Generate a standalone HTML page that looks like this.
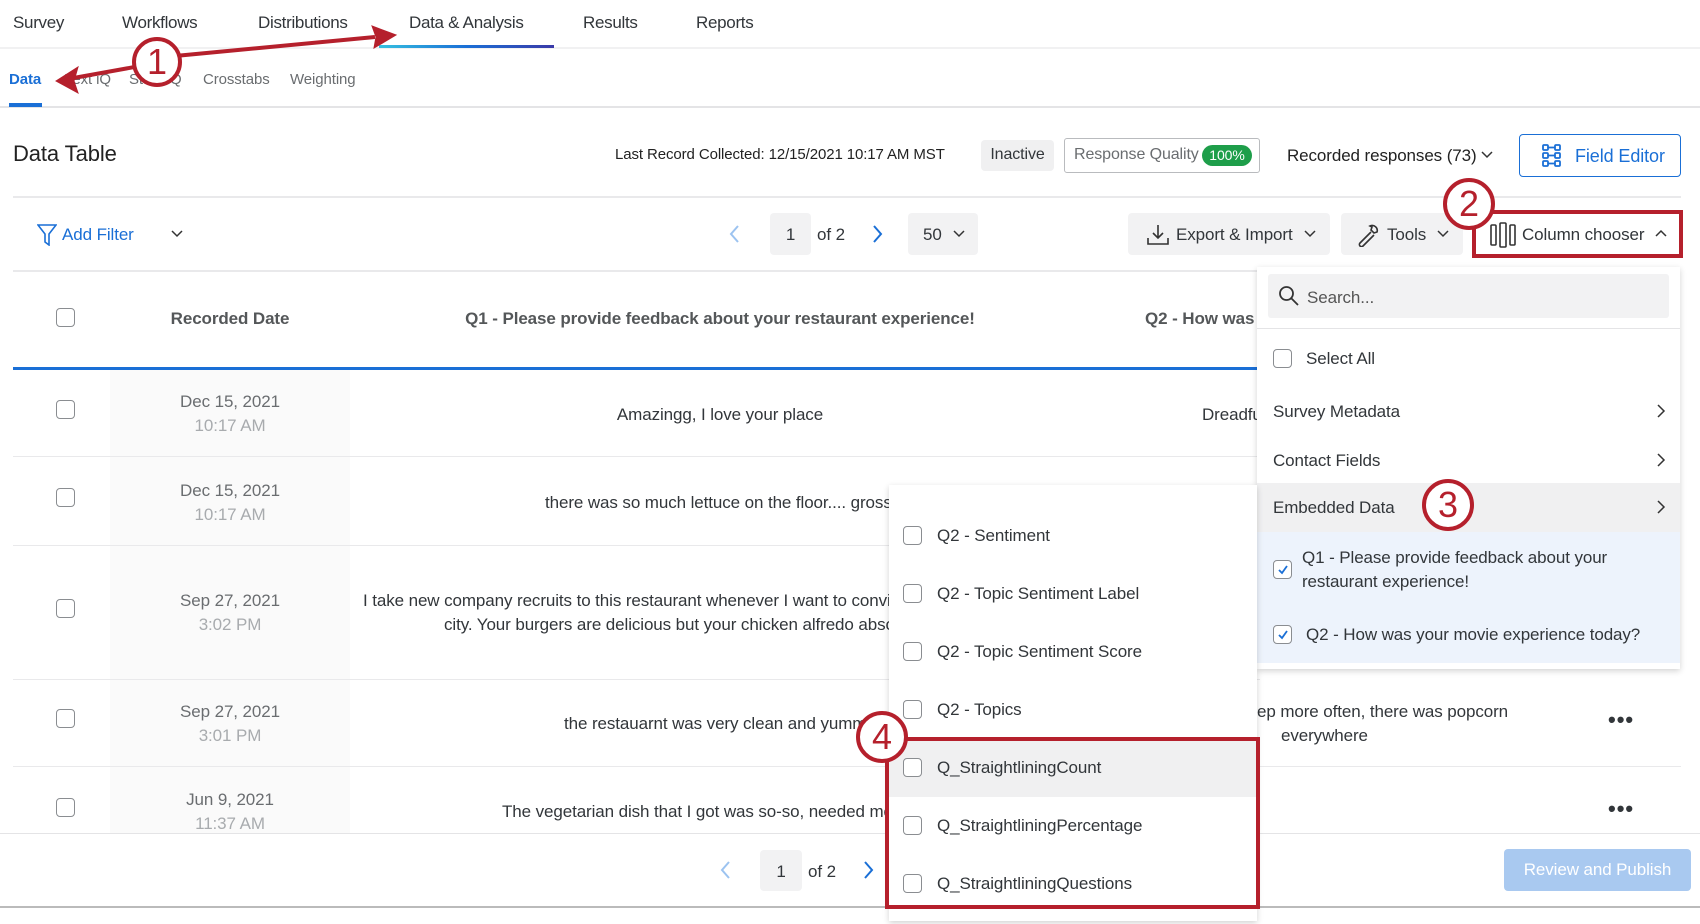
<!DOCTYPE html>
<html><head><meta charset="utf-8">
<style>
*{box-sizing:border-box;margin:0;padding:0}
body{width:1700px;height:924px;position:relative;overflow:hidden;background:#fff;font-family:"Liberation Sans",sans-serif;color:#32363a;font-size:17px;letter-spacing:-0.1px}
.a{position:absolute;white-space:nowrap}
.cb{position:absolute;width:19px;height:19px;border:1.5px solid #8a8d91;border-radius:4px;background:#fff}
.c{position:absolute;text-align:center;white-space:nowrap}
.btn{position:absolute;background:#f2f2f3;border-radius:4px}
.circ{position:absolute;border:4px solid #b5202c;border-radius:50%;background:#fff;color:#b5202c;font-size:36px;text-align:center;font-family:"Liberation Sans",sans-serif;letter-spacing:0}
.row{position:absolute;left:13px;width:1247px;height:1px;background:#e9e9eb}
.gray{color:#a8abae}
.nav{letter-spacing:-0.3px}
</style></head><body>
<div class="a nav" style="left:13px;top:13px;font-size:17px">Survey</div>
<div class="a nav" style="left:122px;top:13px;font-size:17px">Workflows</div>
<div class="a nav" style="left:258px;top:13px;font-size:17px">Distributions</div>
<div class="a nav" style="left:409px;top:13px;font-size:17px">Data &amp; Analysis</div>
<div class="a nav" style="left:583px;top:13px;font-size:17px">Results</div>
<div class="a nav" style="left:696px;top:13px;font-size:17px">Reports</div>
<div class="a" style="left:0;top:47px;width:1700px;height:2px;background:#f1f1f2"></div>
<div class="a" style="left:379px;top:45px;width:175px;height:3px;background:linear-gradient(90deg,#36c0e0,#1a6fd6,#3a3aa8)"></div>
<div class="a" style="left:9px;top:71px;font-size:15px;color:#1a6fd6;font-weight:bold">Data</div>
<div class="a" style="left:65px;top:71px;font-size:15px;color:#6a6d70">Text iQ</div>
<div class="a" style="left:129px;top:71px;font-size:15px;color:#6a6d70">Stats iQ</div>
<div class="a" style="left:203px;top:71px;font-size:15px;color:#6a6d70">Crosstabs</div>
<div class="a" style="left:290px;top:71px;font-size:15px;color:#6a6d70">Weighting</div>
<div class="a" style="left:0;top:106px;width:1700px;height:2px;background:#e4e4e6"></div>
<div class="a" style="left:9px;top:103px;width:33px;height:4px;background:#1a6fd6"></div>
<div class="a" style="left:13px;top:141px;font-size:22px;color:#222">Data Table</div>
<div class="a" style="left:615px;top:146px;font-size:15px;color:#222">Last Record Collected: 12/15/2021 10:17 AM MST</div>
<div class="btn" style="left:981px;top:140px;width:73px;height:31px;background:#f0f0f1"><div class="c" style="width:100%;top:6px;font-size:16px">Inactive</div></div>
<div class="a" style="left:1064px;top:138px;width:196px;height:35px;border:1.5px solid #b9bbbe;border-radius:3px"></div>
<div class="a" style="left:1074px;top:146px;font-size:16px;color:#6a6d70">Response Quality</div>
<div class="a" style="left:1202px;top:145px;width:50px;height:21px;background:#1e9e4a;border-radius:11px;color:#fff;font-size:14px;text-align:center;line-height:21px">100%</div>
<div class="a" style="left:1287px;top:146px;font-size:17px;color:#222">Recorded responses (73)</div>
<svg class="a" style="left:1480px;top:150px" width="14" height="10"><path d="M2 2l5 5 5-5" stroke="#333" fill="none" stroke-width="1.5"/></svg>
<div class="a" style="left:1519px;top:134px;width:162px;height:43px;border:1.5px solid #1a6fd6;border-radius:4px"></div>
<svg class="a" style="left:1542px;top:144px" width="24" height="24" fill="none" stroke="#1a6fd6" stroke-width="1.8"><rect x="1" y="1" width="5" height="5" rx="1"/><rect x="13" y="1" width="5" height="5" rx="1"/><rect x="1" y="9" width="5" height="5" rx="1"/><rect x="13" y="9" width="5" height="5" rx="1"/><rect x="1" y="17" width="5" height="5" rx="1"/><rect x="13" y="17" width="5" height="5" rx="1"/><path d="M6 3.5h7M6 11.5h7M6 19.5h7"/></svg>
<div class="a" style="left:1575px;top:146px;font-size:18px;color:#1a6fd6">Field Editor</div>
<div class="a" style="left:13px;top:196px;width:1668px;height:2px;background:#e9e9eb"></div>
<svg class="a" style="left:37px;top:224px" width="20" height="22" fill="none" stroke="#1a6fd6" stroke-width="1.6"><path d="M1 1h18l-7 9v11l-4-3v-8z"/></svg>
<div class="a" style="left:62px;top:225px;font-size:17px;color:#1a6fd6">Add Filter</div>
<svg class="a" style="left:170px;top:229px" width="14" height="10"><path d="M2 2l5 5 5-5" stroke="#333" fill="none" stroke-width="1.5"/></svg>
<svg class="a" style="left:729px;top:224px" width="12" height="20"><path d="M9 2L2 10l7 8" stroke="#9cc3f0" fill="none" stroke-width="2"/></svg>
<div class="btn" style="left:770px;top:213px;width:41px;height:42px"><div class="c" style="width:100%;top:12px;font-size:17px">1</div></div>
<div class="a" style="left:817px;top:225px;font-size:17px">of 2</div>
<svg class="a" style="left:871px;top:224px" width="12" height="20"><path d="M3 2l7 8-7 8" stroke="#1a6fd6" fill="none" stroke-width="2"/></svg>
<div class="btn" style="left:908px;top:213px;width:70px;height:42px"><div class="a" style="left:15px;top:12px;font-size:17px">50</div><svg class="a" style="left:44px;top:16px" width="14" height="10"><path d="M2 2l5 5 5-5" stroke="#333" fill="none" stroke-width="1.5"/></svg></div>
<div class="btn" style="left:1128px;top:213px;width:202px;height:42px">
<svg class="a" style="left:19px;top:11px" width="22" height="22" fill="none" stroke="#333" stroke-width="1.6"><path d="M11 1v13M6 9l5 5 5-5M1 14v6h20v-6"/></svg>
<div class="a" style="left:48px;top:12px;font-size:17px">Export &amp; Import</div>
<svg class="a" style="left:175px;top:16px" width="14" height="10"><path d="M2 2l5 5 5-5" stroke="#333" fill="none" stroke-width="1.5"/></svg></div>
<div class="btn" style="left:1341px;top:213px;width:122px;height:42px">
<svg class="a" style="left:15px;top:10px" width="24" height="24" fill="none" stroke="#333" stroke-width="1.6"><path d="M14 3a5 5 0 0 1 7 6l-3 1-3-3 1-3zM15 9L4 20a2 2 0 0 0 3 3l11-11"/></svg>
<div class="a" style="left:46px;top:12px;font-size:17px">Tools</div>
<svg class="a" style="left:95px;top:16px" width="14" height="10"><path d="M2 2l5 5 5-5" stroke="#333" fill="none" stroke-width="1.5"/></svg></div>
<div class="a" style="left:1472px;top:210px;width:211px;height:48px;border:4px solid #b5202c"></div>
<svg class="a" style="left:1490px;top:222px" width="26" height="26" fill="none" stroke="#333" stroke-width="1.6"><rect x="1" y="3" width="5" height="20" rx="1"/><rect x="10" y="1" width="6" height="24" rx="1"/><rect x="20" y="3" width="5" height="20" rx="1"/></svg>
<div class="a" style="left:1522px;top:225px;font-size:17px">Column chooser</div>
<svg class="a" style="left:1654px;top:228px" width="14" height="10"><path d="M2 8l5-5 5 5" stroke="#333" fill="none" stroke-width="1.5"/></svg>
<div class="a" style="left:13px;top:270px;width:1247px;height:2px;background:#e9e9eb"></div>
<div class="cb" style="left:56px;top:308px"></div>
<div class="c" style="left:110px;width:240px;top:309px;font-weight:bold;color:#545759">Recorded Date</div>
<div class="c" style="left:350px;width:740px;top:309px;font-weight:bold;color:#545759">Q1 - Please provide feedback about your restaurant experience!</div>
<div class="a" style="left:1145px;top:309px;font-weight:bold;color:#545759">Q2 - How was</div>
<div class="a" style="left:13px;top:367px;width:1247px;height:3px;background:#1a6fd6"></div>
<div class="a" style="left:110px;top:370px;width:240px;height:464px;background:#fafafa"></div>
<div class="cb" style="left:56px;top:400px"></div>
<div class="c" style="left:110px;width:240px;top:392px;color:#6a6d70">Dec 15, 2021</div>
<div class="c gray" style="left:110px;width:240px;top:416px">10:17 AM</div>
<div class="c" style="left:350px;width:740px;top:405px">Amazingg, I love your place</div>
<div class="a" style="left:1202px;top:405px">Dreadfu</div>
<div class="row" style="top:456px"></div>
<div class="cb" style="left:56px;top:488px"></div>
<div class="c" style="left:110px;width:240px;top:481px;color:#6a6d70">Dec 15, 2021</div>
<div class="c gray" style="left:110px;width:240px;top:505px">10:17 AM</div>
<div class="a" style="left:545px;top:493px">there was so much lettuce on the floor.... gross floor</div>
<div class="row" style="top:545px"></div>
<div class="cb" style="left:56px;top:599px"></div>
<div class="c" style="left:110px;width:240px;top:591px;color:#6a6d70">Sep 27, 2021</div>
<div class="c gray" style="left:110px;width:240px;top:615px">3:02 PM</div>
<div class="a" style="left:363px;top:591px">I take new company recruits to this restaurant whenever I want to convince them</div>
<div class="a" style="left:444px;top:615px">city. Your burgers are delicious but your chicken alfredo absolutely</div>
<div class="row" style="top:679px"></div>
<div class="cb" style="left:56px;top:709px"></div>
<div class="c" style="left:110px;width:240px;top:702px;color:#6a6d70">Sep 27, 2021</div>
<div class="c gray" style="left:110px;width:240px;top:726px">3:01 PM</div>
<div class="a" style="left:564px;top:714px">the restauarnt was very clean and yummy. I will</div>
<div class="a" style="left:1257px;top:702px">ep more often, there was popcorn</div>
<div class="a" style="left:1281px;top:726px">everywhere</div>
<div class="a" style="left:1608px;top:707px;font-size:22px;font-weight:bold;letter-spacing:1px">•••</div>
<div class="row" style="top:766px;width:1668px"></div>
<div class="cb" style="left:56px;top:798px"></div>
<div class="c" style="left:110px;width:240px;top:790px;color:#6a6d70">Jun 9, 2021</div>
<div class="c gray" style="left:110px;width:240px;top:814px">11:37 AM</div>
<div class="a" style="left:502px;top:802px">The vegetarian dish that I got was so-so, needed more</div>
<div class="a" style="left:1608px;top:796px;font-size:22px;font-weight:bold;letter-spacing:1px">•••</div>
<div class="a" style="left:0;top:833px;width:1700px;height:91px;background:#fff"></div>
<div class="a" style="left:0;top:833px;width:1700px;height:1px;background:#e4e4e6"></div>
<svg class="a" style="left:720px;top:860px" width="12" height="20"><path d="M9 2L2 10l7 8" stroke="#9cc3f0" fill="none" stroke-width="2"/></svg>
<div class="btn" style="left:760px;top:850px;width:42px;height:41px"><div class="c" style="width:100%;top:12px;font-size:17px">1</div></div>
<div class="a" style="left:808px;top:862px;font-size:17px">of 2</div>
<svg class="a" style="left:862px;top:860px" width="12" height="20"><path d="M3 2l7 8-7 8" stroke="#1a6fd6" fill="none" stroke-width="2"/></svg>
<div class="a" style="left:1504px;top:849px;width:187px;height:42px;background:#a9c9f0;border-radius:4px;color:#fff;font-size:17px;text-align:center;line-height:42px">Review and Publish</div>
<div class="a" style="left:0;top:906px;width:1700px;height:2px;background:#bbb"></div>
<div class="a" style="left:1257px;top:267px;width:423px;height:402px;background:#fff;box-shadow:0 2px 6px rgba(0,0,0,.18)"></div>
<div class="a" style="left:1268px;top:274px;width:401px;height:44px;background:#f2f2f3;border-radius:3px"></div>
<svg class="a" style="left:1278px;top:285px" width="22" height="22" fill="none" stroke="#333" stroke-width="1.8"><circle cx="8.5" cy="8.5" r="6.5"/><path d="M13 13l7 7"/></svg>
<div class="a" style="left:1307px;top:288px;font-size:17px;color:#555">Search...</div>
<div class="a" style="left:1257px;top:328px;width:423px;height:1px;background:#e4e4e6"></div>
<div class="cb" style="left:1273px;top:349px"></div>
<div class="a" style="left:1306px;top:349px;font-size:17px">Select All</div>
<div class="a" style="left:1273px;top:402px">Survey Metadata</div>
<svg class="a" style="left:1656px;top:403px" width="10" height="16"><path d="M2 2l6 6-6 6" stroke="#333" fill="none" stroke-width="1.5"/></svg>
<div class="a" style="left:1273px;top:451px">Contact Fields</div>
<svg class="a" style="left:1656px;top:452px" width="10" height="16"><path d="M2 2l6 6-6 6" stroke="#333" fill="none" stroke-width="1.5"/></svg>
<div class="a" style="left:1257px;top:483px;width:423px;height:49px;background:#f0f0f1"></div>
<div class="a" style="left:1273px;top:498px">Embedded Data</div>
<svg class="a" style="left:1656px;top:499px" width="10" height="16"><path d="M2 2l6 6-6 6" stroke="#333" fill="none" stroke-width="1.5"/></svg>
<div class="a" style="left:1257px;top:532px;width:423px;height:131px;background:#edf3fc"></div>
<div class="cb" style="left:1273px;top:560px"></div>
<svg class="a" style="left:1276px;top:563px" width="14" height="14"><path d="M3 7l3 3 5-7" stroke="#1a6fd6" fill="none" stroke-width="1.8"/></svg>
<div class="a" style="left:1302px;top:548px">Q1 - Please provide feedback about your</div>
<div class="a" style="left:1302px;top:572px">restaurant experience!</div>
<div class="cb" style="left:1273px;top:625px"></div>
<svg class="a" style="left:1276px;top:628px" width="14" height="14"><path d="M3 7l3 3 5-7" stroke="#1a6fd6" fill="none" stroke-width="1.8"/></svg>
<div class="a" style="left:1306px;top:625px">Q2 - How was your movie experience today?</div>
<div class="a" style="left:889px;top:485px;width:368px;height:436px;background:#fff;box-shadow:0 2px 6px rgba(0,0,0,.18)"></div>
<div class="a" style="left:889px;top:739px;width:368px;height:58px;background:#f0f0f1"></div>
<div class="cb" style="left:903px;top:526px"></div><div class="a" style="left:937px;top:526px">Q2 - Sentiment</div>
<div class="cb" style="left:903px;top:584px"></div><div class="a" style="left:937px;top:584px">Q2 - Topic Sentiment Label</div>
<div class="cb" style="left:903px;top:642px"></div><div class="a" style="left:937px;top:642px">Q2 - Topic Sentiment Score</div>
<div class="cb" style="left:903px;top:700px"></div><div class="a" style="left:937px;top:700px">Q2 - Topics</div>
<div class="cb" style="left:903px;top:758px"></div><div class="a" style="left:937px;top:758px">Q_StraightliningCount</div>
<div class="cb" style="left:903px;top:816px"></div><div class="a" style="left:937px;top:816px">Q_StraightliningPercentage</div>
<div class="cb" style="left:903px;top:874px"></div><div class="a" style="left:937px;top:874px">Q_StraightliningQuestions</div>
<div class="a" style="left:885px;top:737px;width:375px;height:172px;border:4px solid #b5202c"></div>
<svg class="a" style="left:0;top:0" width="500" height="120">
<g stroke="#b5202c" stroke-width="4" fill="#b5202c">
<line x1="140" y1="66" x2="68" y2="79"/><path d="M56 81l22-14-4 14 4 12z" stroke-width="1"/>
<line x1="175" y1="56" x2="375" y2="37"/><path d="M396 35l-24-9 4 11-2 11z" stroke-width="1"/>
</g></svg>
<div class="circ" style="left:132px;top:37px;width:50px;height:50px;line-height:42px">1</div>
<div class="circ" style="left:1443px;top:178px;width:52px;height:52px;line-height:44px">2</div>
<div class="circ" style="left:1422px;top:479px;width:52px;height:52px;line-height:44px">3</div>
<div class="circ" style="left:856px;top:711px;width:52px;height:52px;line-height:44px">4</div>
</body></html>
